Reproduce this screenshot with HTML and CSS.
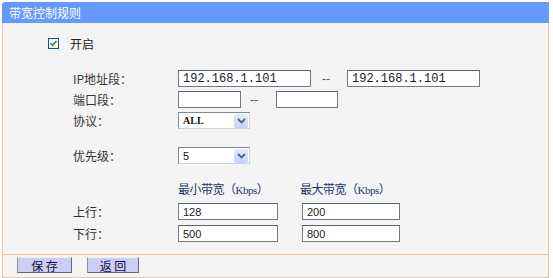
FILE: index.html
```html
<!DOCTYPE html>
<html lang="zh-CN">
<head>
    <meta charset="UTF-8">
    <title>带宽控制规则</title>
    <link rel="stylesheet" href="styles.css">
</head>
<body>
    <div class="panel">
        <div class="panel-title">带宽控制规则</div>
        <div class="panel-body">
            <div class="row check-row">
                <span class="checkbox">
                    <svg width="11" height="11" viewBox="0 0 11 11"><rect x="0.5" y="0.5" width="10" height="10" fill="#fff" stroke="#1c5180"/><path d="M2.5 5.2 L4.5 7.3 L8.5 3" fill="none" stroke="#21a121" stroke-width="1.8"/></svg>
                </span>
                <span class="check-label">开启</span>
            </div>

            <div class="row row-ip">
                <label class="field-label">IP地址段：</label>
                <input class="text mono ip" type="text" value="192.168.1.101">
                <span class="sep sep-ip">--</span>
                <input class="text mono ip" type="text" value="192.168.1.101">
            </div>
            <div class="row">
                <label class="field-label">端口段：</label>
                <input class="text port" type="text" value="">
                <span class="sep sep-port">--</span>
                <input class="text port2" type="text" value="">
            </div>
            <div class="row">
                <label class="field-label">协议：</label>
                <div class="select">
                    <span class="select-value serif">ALL</span>
                    <span class="select-arrow">
                        <svg width="9" height="6" viewBox="0 0 9 6"><path d="M1 1 L4.5 4.5 L8 1" fill="none" stroke="#4d6185" stroke-width="1.8"/></svg>
                    </span>
                </div>
            </div>

            <div class="row row-priority">
                <label class="field-label">优先级：</label>
                <div class="select">
                    <span class="select-value">5</span>
                    <span class="select-arrow">
                        <svg width="9" height="6" viewBox="0 0 9 6"><path d="M1 1 L4.5 4.5 L8 1" fill="none" stroke="#4d6185" stroke-width="1.8"/></svg>
                    </span>
                </div>
            </div>

            <div class="row row-head">
                <span class="field-label"></span>
                <span class="col-head col-min">最小带宽（<span class="kbps">Kbps</span>）</span>
                <span class="col-head">最大带宽（<span class="kbps">Kbps</span>）</span>
            </div>
            <div class="row row-up">
                <label class="field-label">上行：</label>
                <input class="text bw" type="text" value="128">
                <input class="text bw bw-max" type="text" value="200">
            </div>
            <div class="row row-down">
                <label class="field-label">下行：</label>
                <input class="text bw" type="text" value="500">
                <input class="text bw bw-max" type="text" value="800">
            </div>
        </div>
        <div class="panel-foot">
            <button class="btn btn-save">保 存</button>
            <button class="btn btn-back">返 回</button>
        </div>
    </div>
</body>
</html>
```

FILE: styles.css
```css
body {
    margin: 0;
    padding: 2px 0 0 2px;
    background: #fff;
    font-family: "Noto Sans CJK SC", "Liberation Sans", sans-serif;
    font-size: 12px;
    color: #333;
}
.panel {
    width: 547px;
    box-sizing: border-box;
}
.panel-title {
    height: 21px;
    line-height: 21px;
    background: #6699ff;
    color: #fff;
    padding-left: 7px;
    border-radius: 3px 0 0 0;
}
.panel-body {
    background: #f4f4f4;
    border-left: 1px solid #f0c49a;
    border-right: 1px solid #f0c49a;
    padding: 10px 0 10px 0;
}
.row { display: flex; align-items: center; height: 21px; padding-left: 70px; }
.check-row { height: 20px; padding-left: 45px; margin-bottom: 15px; }
.checkbox { display: flex; width: 11px; height: 11px; }
.check-label { margin-left: 11px; color: #222; }
.field-label { width: 105px; flex: none; color: #333; }
.text {
    box-sizing: border-box;
    height: 17px;
    margin: 0;
    padding: 0 0 0 4px;
    border: 1px solid #6f7b88;
    border-top-color: #58626e;
    background: #fff;
    font-family: "Liberation Sans", Arial, sans-serif;
    font-size: 11px;
    color: #222;
    outline: none;
}
.mono { font-family: "Liberation Mono", "Courier New", monospace; font-size: 12px; }
.ip { width: 133px; }
.port { width: 63px; }
.port2 { width: 62px; }
.sep { box-sizing: border-box; color: #555; font-family: "Liberation Sans", sans-serif; }
.sep-ip { width: 36px; padding-left: 11px; }
.sep-port { width: 35px; padding-left: 9px; }
.select {
    box-sizing: border-box;
    width: 72px;
    height: 17px;
    display: flex;
    align-items: center;
    justify-content: space-between;
    border: 1px solid #7f8a97;
    border-right-color: #c9d3e0;
    border-bottom-color: #c9d3e0;
    background: #fff;
}
.select-value { padding-left: 4px; font-family: "Liberation Sans", sans-serif; font-size: 11px; color: #111; }
.select-value.serif { font-family: "Liberation Serif", serif; font-size: 10px; font-weight: bold; }
.select-arrow {
    display: flex;
    align-items: center;
    justify-content: center;
    width: 14px;
    height: 14px;
    margin-right: 1px;
    background: linear-gradient(#e3ebfb, #c3d3f3);
    border-radius: 2px;
}
.row-priority { margin-top: 14px; }
.row-head { height: 20px; margin-top: 12px; }
.col-head { color: #1e3468; letter-spacing: -0.5px; }
.col-min { width: 122px; }
.kbps { font-family: "Liberation Serif", serif; font-size: 11px; }
.row-up { margin-top: 3px; }
.row-down { margin-top: 1px; }
.bw { width: 100px; }
.bw-max { width: 98px; margin-left: 24px; }
.panel-foot {
    height: 20px;
    background: #f4f4f4;
    border: 1px solid #f0c49a;
    border-bottom-color: #e2c8b0;
    display: flex;
    align-items: flex-start;
    gap: 15px;
    padding: 2px 0 0 14px;
    box-sizing: content-box;
    width: 531px;
}
.btn {
    box-sizing: border-box;
    height: 16px;
    padding: 0;
    background: #cbcdf6;
    border: 1px solid #6a6a6a;
    border-top-color: #f0f0f0;
    border-left-color: #909090;
    font-family: "Noto Sans CJK SC", sans-serif;
    font-size: 12px;
    line-height: 13px;
    color: #101040;
}
.btn-save { width: 55px; }
.btn-back { width: 52px; }
```
